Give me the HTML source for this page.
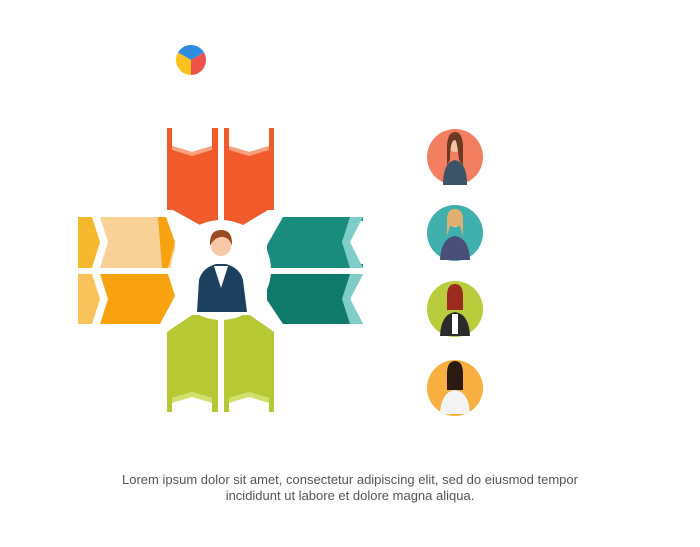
<!DOCTYPE html>
<html><head><meta charset="utf-8"><style>
html,body{margin:0;padding:0;background:#fff;width:700px;height:547px;overflow:hidden}
.t{position:absolute;left:0;width:700px;text-align:center;font-family:"Liberation Sans",sans-serif;font-size:13px;color:#555;line-height:16px}
</style></head><body>
<svg width="700" height="547" style="position:absolute;left:0;top:0">
<path d="M191,60 L178,52.5 A15,15 0 0 1 204,52.5 Z" fill="#2f8be0"/>
<path d="M191,60 L204,52.5 A15,15 0 0 1 191,75 Z" fill="#f0524a"/>
<path d="M191,60 L191,75 A15,15 0 0 1 178,52.5 Z" fill="#fbc21d"/>
<!-- red top -->
<polygon points="167,128 172,128 172,146 192,152 212,146 212,128 218,128 218,225 200,225 173,210 167,210" fill="#f15a2a"/>
<polygon points="224,128 229,128 229,146 249,152 269,146 269,128 274,128 274,210 268,210 243,225 224,225" fill="#f15a2a"/>
<polygon points="172,146 192,152 212,146 212,150 192,156 172,150" fill="#f7a080"/>
<polygon points="229,146 249,152 269,146 269,150 249,156 229,150" fill="#f7a080"/>
<!-- orange left -->
<polygon points="78,217 92,217 100,242 92,268 78,268" fill="#f6b92d"/>
<polygon points="100,217 158,217 175,245 175,268 100,268 108,242" fill="#f7d196"/>
<polygon points="158,217 166,217 175,242 168,268 162,268" fill="#f8a20f"/>
<polygon points="78,274 92,274 100,299 92,324 78,324" fill="#f9c25a"/>
<polygon points="100,274 168,274 175,296 160,324 100,324 108,299" fill="#f8a20f"/>
<!-- teal right -->
<polygon points="283,217 363,217 363,221 350,221 342,242 350,264 363,264 363,268 267,268 267,245" fill="#198c7e"/>
<polygon points="350,217 363,217 350,242 363,268 350,268 342,242" fill="#7fcdc7"/>
<polygon points="267,274 363,274 350,299 363,324 283,324 267,300" fill="#0f7a6a"/>
<polygon points="350,274 363,274 350,299 363,324 350,324 342,299" fill="#7fcdc7"/>
<!-- green bottom -->
<polygon points="167,332 192,315 218,315 218,412 212,412 212,398 192,392 172,398 172,412 167,412" fill="#b6c935"/>
<polygon points="224,315 250,315 274,332 274,412 269,412 269,398 249,392 229,398 229,412 224,412" fill="#b6c935"/>
<polygon points="172,398 192,392 212,398 212,403 192,397 172,403" fill="#d2df6e"/>
<polygon points="229,398 249,392 269,398 269,403 249,397 229,403" fill="#d2df6e"/>
<!-- center -->
<circle cx="221" cy="270" r="50" fill="#fff"/>
<path d="M197,312 L199,280 Q202,268 216,264 L226,264 Q240,268 243,280 L247,312 Z" fill="#1d4060"/>
<polygon points="214,266 228,266 221,288" fill="#fff"/>
<circle cx="221" cy="246" r="10" fill="#f6c8a6"/>
<path d="M210,246 Q209,230 221,230 Q233,230 232,246 Q229,236 220,237 Q213,239 210,246Z" fill="#9c4a22"/>
<!-- right circles -->
<circle cx="455" cy="157" r="28" fill="#f47e60"/>
<circle cx="455" cy="233" r="28" fill="#3fb0ad"/>
<circle cx="455" cy="309" r="28" fill="#b9cd3c"/>
<circle cx="455" cy="388" r="28" fill="#f9b040"/>
<g>
<path d="M443,185 Q443,162 455,160 Q467,162 467,185 Z" fill="#3d5366"/><circle cx="455" cy="145" r="7" fill="#f4c5a2"/><path d="M447,145 Q448,132 455,132 Q462,132 463,145 L463,165 L459,160 Q457,140 455,140 Q450,140 450,160 L447,165 Z" fill="#6b3a22"/>
<path d="M440,260 Q441,238 455,236 Q469,238 470,260 Z" fill="#4c4e7a"/><circle cx="455" cy="220" r="7" fill="#f4c5a2"/><path d="M447,220 Q447,209 455,209 Q463,209 463,220 L463,236 L460,226 L450,226 L447,236Z" fill="#e0b070"/>
<path d="M440,336 Q441,314 455,312 Q469,314 470,336 Z" fill="#2b2b2b"/><rect x="452" y="314" width="6" height="20" fill="#fff"/><circle cx="455" cy="296" r="7" fill="#f4c5a2"/><path d="M447,296 Q447,284 455,284 Q463,284 463,296 L463,310 L447,310Z" fill="#9c2a1e"/>
<path d="M440,414 Q441,392 455,390 Q469,392 470,414 Z" fill="#f4f4f4"/><circle cx="455" cy="374" r="7" fill="#d9a07a"/><path d="M447,374 Q447,361 455,361 Q463,361 463,374 L463,390 L447,390Z" fill="#2a1a12"/>
</g>
</svg>
<div class="t" style="top:472px">Lorem ipsum dolor sit amet, consectetur adipiscing elit, sed do eiusmod tempor<br>incididunt ut labore et dolore magna aliqua.</div>
</body></html>
